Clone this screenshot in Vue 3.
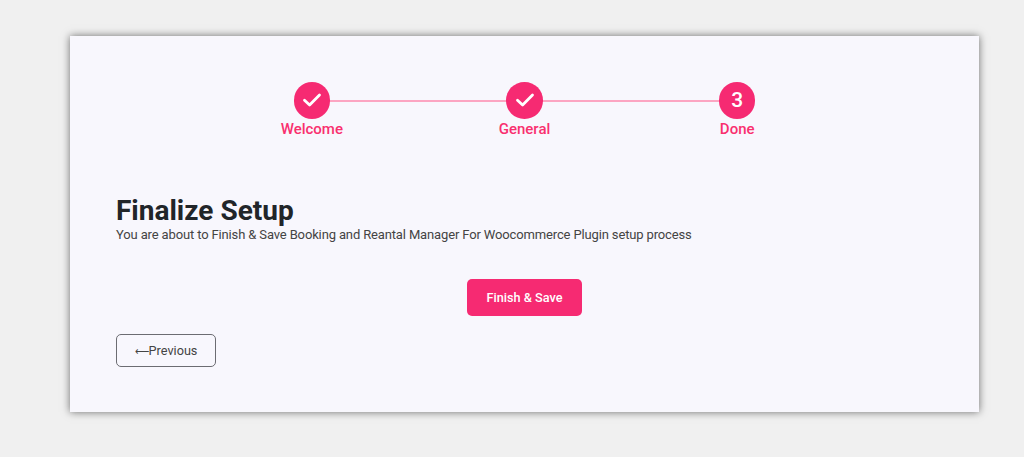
<template>
  <div class="page">
    <div class="card">
      <!-- steps -->
      <div class="steps">
        <div v-for="(step, i) in steps" :key="step.label" class="step">
          <div v-if="i < steps.length - 1" class="step-line"></div>
          <div class="step-circle">
            <svg v-if="step.done" width="20" height="16" viewBox="0 0 20 16" fill="none">
              <path d="M2.5 8.2 L7.6 13 L17.5 3" stroke="#fff" stroke-width="2.8" stroke-linecap="round" stroke-linejoin="round" />
            </svg>
            <span v-else>{{ i + 1 }}</span>
          </div>
          <div class="step-label">{{ step.label }}</div>
        </div>
      </div>

      <h2 class="title">Finalize Setup</h2>
      <p class="desc">You are about to Finish &amp; Save Booking and Reantal Manager For Woocommerce Plugin setup process</p>

      <div class="finish-row">
        <button class="btn-finish">Finish &amp; Save</button>
      </div>
      <button class="btn-prev"><span class="arrow">⟵</span>Previous</button>
    </div>
  </div>
</template>

<script setup>
const steps = [
  { label: 'Welcome', done: true },
  { label: 'General', done: true },
  { label: 'Done', done: false }
];
</script>

<style>
body {
  background: #f0f0f0;
}
</style>

<style scoped>
.page {
  height: 457px;
  padding: 36px 45px 0 70px;
  box-sizing: border-box;
  font-family: Roboto, "Open Sans", sans-serif;
  overflow: hidden;
}

.card {
  height: 376px;
  box-sizing: border-box;
  padding: 46px 46px 0;
  background: #f8f7fd;
  box-shadow: 0 0 8px rgba(0, 0, 0, 0.55);
}

.steps {
  display: grid;
  grid-template-columns: repeat(3, 212.7px);
  justify-content: center;
}

.step {
  position: relative;
  display: flex;
  flex-direction: column;
  align-items: center;
}

.step-line {
  position: absolute;
  top: 18px;
  left: 50%;
  width: 100%;
  height: 2px;
  background: #fca5c2;
}

.step-circle {
  position: relative;
  width: 36.6px;
  height: 36.6px;
  border-radius: 50%;
  background: #f62a72;
  color: #fff;
  font-size: 21px;
  font-weight: 500;
  display: flex;
  align-items: center;
  justify-content: center;
}

.step-label {
  margin-top: 0;
  font-size: 15px;
  line-height: 20px;
  font-weight: 500;
  color: #f9306f;
}

.title {
  margin: 56px 0 0;
  font-size: 28px;
  line-height: 31px;
  font-weight: 700;
  color: #212529;
}

.desc {
  margin: 0;
  font-size: 13px;
  letter-spacing: -0.14px;
  line-height: 18px;
  color: #444;
}

.finish-row {
  display: flex;
  justify-content: center;
  margin-top: 35px;
}

.btn-finish {
  width: 115px;
  height: 37px;
  padding: 0;
  border: none;
  border-radius: 5px;
  background: #f62a72;
  color: #fff;
  font-family: inherit;
  font-size: 12.7px;
  font-weight: 500;
}

.btn-prev {
  display: block;
  margin-top: 18px;
  width: 100px;
  height: 33px;
  padding: 0;
  border: 1px solid #6c6c72;
  border-radius: 5px;
  background: transparent;
  color: #444;
  font-family: inherit;
  font-size: 12.7px;
}

.arrow {
  font-size: 9.5px;
}
</style>
